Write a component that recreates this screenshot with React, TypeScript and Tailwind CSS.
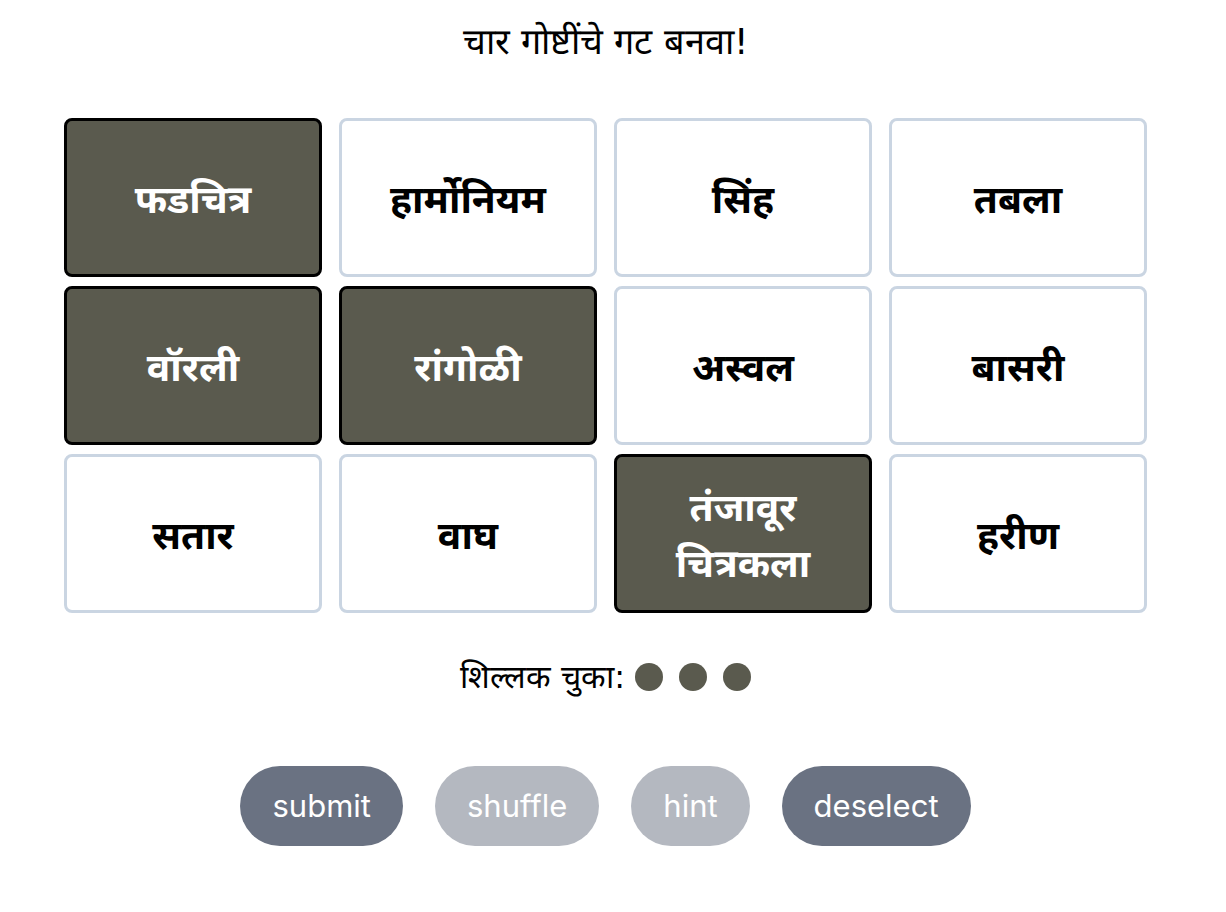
import { useState } from 'react';

const words = [
  'फडचित्र',
  'हार्मोनियम',
  'सिंह',
  'तबला',
  'वॉरली',
  'रांगोळी',
  'अस्वल',
  'बासरी',
  'सतार',
  'वाघ',
  'तंजावूर चित्रकला',
  'हरीण',
];

const initialSelected = ['फडचित्र', 'वॉरली', 'रांगोळी', 'तंजावूर चित्रकला'];

export default function App() {
  const [selected, setSelected] = useState<string[]>(initialSelected);

  const toggle = (word: string) => {
    setSelected(prev =>
      prev.includes(word) ? prev.filter(w => w !== word) : prev.length < 4 ? [...prev, word] : prev
    );
  };

  return (
    <div
      className="w-[1211px] flex flex-col items-center bg-white text-black"
      style={{ fontFamily: '"DejaVu Sans", sans-serif' }}
    >
      <h1 className="mt-[18px] text-[36px] leading-[48px] font-normal">चार गोष्टींचे गट बनवा!</h1>

      <div className="mt-[52px] grid grid-cols-4 gap-x-[17px] gap-y-[9px]">
        {words.map(word => {
          const isSelected = selected.includes(word);
          return (
            <button
              key={word}
              onClick={() => toggle(word)}
              style={{ fontFamily: '"Noto Sans", sans-serif' }}
              className={
                isSelected
                  ? 'w-[258px] h-[159px] rounded-lg border-[3px] border-black bg-[#5a5a4e] text-white text-[39px] font-bold leading-[56px] px-4'
                  : 'w-[258px] h-[159px] rounded-lg border-[3px] border-slate-300 bg-white text-black text-[39px] font-bold leading-[56px] px-4'
              }
            >
              {word}
            </button>
          );
        })}
      </div>

      <div className="mt-[44px] flex items-center gap-[10px] text-[32px] leading-[40px]">
        <span>शिल्लक चुका:</span>
        <div className="flex gap-4">
          <span className="w-7 h-7 rounded-full bg-[#5a5a4e]" />
          <span className="w-7 h-7 rounded-full bg-[#5a5a4e]" />
          <span className="w-7 h-7 rounded-full bg-[#5a5a4e]" />
        </div>
      </div>

      <div
        className="mt-[69px] flex gap-8 text-[31px] text-white"
        style={{ fontFamily: 'Inter, sans-serif' }}
      >
        <button className="h-20 px-8 rounded-full bg-gray-500">submit</button>
        <button className="h-20 px-8 rounded-full bg-gray-500/50">shuffle</button>
        <button className="h-20 px-8 rounded-full bg-gray-500/50">hint</button>
        <button className="h-20 px-8 rounded-full bg-gray-500">deselect</button>
      </div>
    </div>
  );
}
